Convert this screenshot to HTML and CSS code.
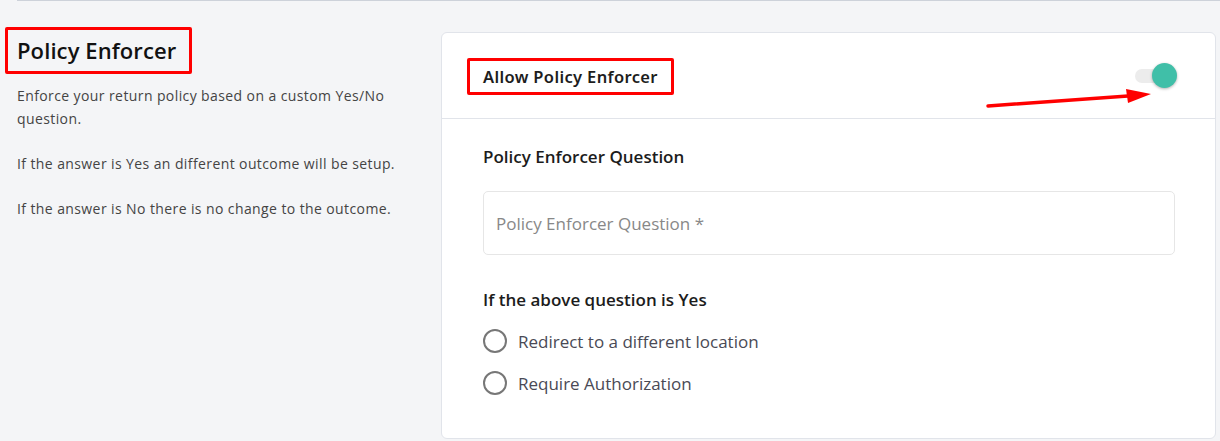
FILE: index.html
```html
<!DOCTYPE html>
<html lang="en">
    <head>
        <meta charset="utf-8">
        <title>Policy Enforcer</title>
        <link rel="stylesheet" href="styles.css">
    </head>
    <body>
        <div class="top-rule"></div>
        <div class="section"> <!-- left text, right card -->
            <div class="section-info">
                <h2 class="section-title mark">Policy Enforcer</h2>
                <p>Enforce your return policy based on a custom Yes/No question.</p>
                <p>If the answer is Yes an different outcome will be setup.</p>
                <p>If the answer is No there is no change to the outcome.</p>
            </div>
            <div class="card">
                <div class="card-head">
                    <span class="card-title mark">Allow Policy Enforcer</span>
                    <span class="toggle"><span class="knob"></span></span>
                    <!-- annotation arrow -->
                    <svg class="arrow" width="180" height="30" viewBox="0 0 180 30">
                        <line x1="2" y1="25" x2="142" y2="15" stroke="#ff0000" stroke-width="3.5" stroke-linecap="round"/>
                        <polygon points="140,8 165,13 142,22" fill="#ff0000"/>
                    </svg>
                </div>
                <div class="card-body">
                    <h3 class="field-title">Policy Enforcer Question</h3>
                    <div class="input">Policy Enforcer Question *</div>
                    <h3 class="field-title yes-title">If the above question is Yes</h3>
                    <label class="radio"><span class="dot"></span>Redirect to a different location</label>
                    <label class="radio"><span class="dot"></span>Require Authorization</label>
                </div>
            </div>
        </div>
    </body>
</html>
```
FILE: styles.css
```css
*{
    margin: 0;
    padding: 0;
    box-sizing: border-box;
}
body{
    background: #f4f5f7;
    font-family: "Open Sans", Lato, sans-serif;
    color: #222;
}
.top-rule{
    margin-left: 17px;
    border-top: 1px solid #cdd2da;
}
.section{
    display: flex;
    padding-top: 26px;
}
.section-info{
    width: 441px;
    padding-left: 5px;
}
.mark{ /* red annotation boxes */
    display: inline-block;
    border: 3px solid #ff0000;
    border-radius: 2px;
}
.section-title{
    font-size: 22px;
    font-weight: 600;
    letter-spacing: 0.1px;
    color: #111;
    padding: 8px 13px 8px 9px;
    line-height: 25px;
    margin-bottom: 10px;
}
.section-info p{
    margin-left: 12px;
    width: 390px;
    font-size: 14px;
    line-height: 23px;
    letter-spacing: 0.4px;
    color: #444;
    margin-bottom: 22px;
}
.card{
    width: 775px;
    height: 407px;
    margin-top: 5px;
    background: #fff;
    border: 1px solid #e1e4ea;
    border-radius: 6px;
}
.card-head{
    position: relative;
    height: 86px;
    border-bottom: 1px solid #e1e4ea;
    display: flex;
    align-items: center;
    justify-content: space-between;
    padding: 2px 40px 0 25px;
}
.card-title{
    font-family: "Noto Sans", sans-serif;
    font-size: 16.5px;
    font-weight: 600;
    letter-spacing: 0.35px;
    color: #1d1d1d;
    padding: 7px 13px;
    line-height: 17px;
}
.toggle{
    position: relative;
    width: 40px;
    height: 14px;
    border-radius: 7px;
    background: #ececec;
    margin-top: -2px;
}
.knob{
    position: absolute;
    right: -2px;
    top: -6px;
    width: 25px;
    height: 25px;
    border-radius: 50%;
    background: #40bfa8;
    box-shadow: 0 1px 3px rgba(0,0,0,0.3);
}
.arrow{
    position: absolute;
    left: 544px;
    top: 48px;
}
.card-body{
    padding: 28px 40px 0 41px;
}
.field-title{
    font-size: 17px;
    font-weight: 600;
    color: #1c1c1c;
    line-height: 20px;
}
.input{
    margin-top: 24px;
    height: 64px;
    border: 1px solid #e6e6e6;
    border-radius: 5px;
    padding: 0 12px;
    display: flex;
    align-items: center;
    font-size: 17px;
    color: #888;
}
.yes-title{
    margin-top: 35px;
    margin-bottom: 10px;
}
.radio{
    display: flex;
    align-items: center;
    height: 42px;
    font-size: 17px;
    color: #4a4a55;
}
.dot{
    width: 24px;
    height: 24px;
    border: 2px solid #777;
    border-radius: 50%;
    margin-right: 11px;
}
```
